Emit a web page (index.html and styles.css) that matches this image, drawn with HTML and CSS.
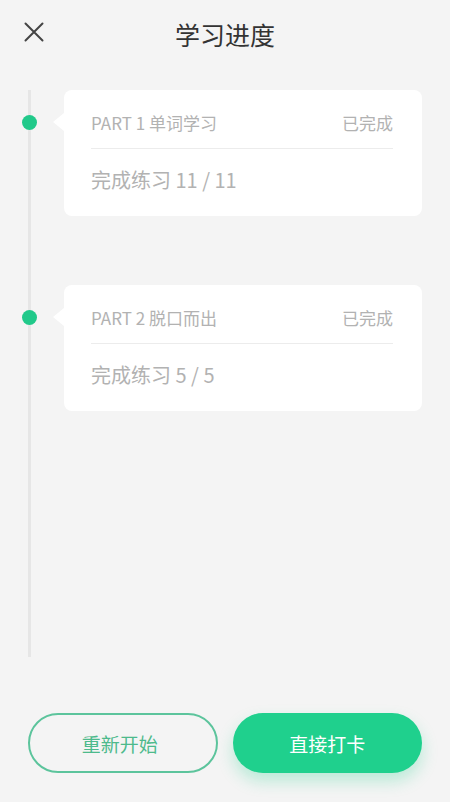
FILE: index.html
```html
<!DOCTYPE html>
<html lang="zh-CN">
<head>
<meta charset="utf-8">
<title>学习进度</title>
<link rel="stylesheet" href="styles.css">
</head>
<body>
<div class="page">
  <header class="header">
    <button class="close" aria-label="关闭">
      <svg width="20" height="20" viewBox="0 0 20 20"><path d="M1.5 1.5 L18.5 18.5 M18.5 1.5 L1.5 18.5" stroke="#444" stroke-width="2" fill="none" stroke-linecap="round"/></svg>
    </button>
    <h1 class="title">学习进度</h1>
  </header>

  <section class="timeline">
    <div class="item">
      <span class="dot"></span>
      <div class="card">
        <div class="card-head">
          <span class="part">PART 1 单词学习</span>
          <span class="status">已完成</span>
        </div>
        <div class="card-body">完成练习 11 / 11</div>
      </div>
    </div>
    <div class="item">
      <span class="dot"></span>
      <div class="card">
        <div class="card-head">
          <span class="part">PART 2 脱口而出</span>
          <span class="status">已完成</span>
        </div>
        <div class="card-body">完成练习 5 / 5</div>
      </div>
    </div>
  </section>

  <footer class="actions">
    <button class="btn btn-outline">重新开始</button>
    <button class="btn btn-fill">直接打卡</button>
  </footer>
</div>
</body>
</html>
```

FILE: styles.css
```css
* { box-sizing: border-box; }
html, body {
  margin: 0;
  padding: 0;
  background: #f4f4f4;
  font-family: "Noto Sans CJK SC", "Noto Sans", sans-serif;
}
.page {
  width: 450px;
  height: 802px;
  display: flex;
  flex-direction: column;
}
.header {
  height: 68px;
  position: relative;
  display: flex;
  align-items: center;
  justify-content: center;
}
.close {
  position: absolute;
  left: 24px;
  top: 22px;
  width: 20px;
  height: 20px;
  padding: 0;
  border: 0;
  background: none;
  display: block;
}
.close svg { display: block; }
.title {
  margin: 0;
  font-size: 25px;
  font-weight: 400;
  color: #333;
  line-height: 1;
  padding-top: 1px;
}
.timeline {
  margin: 22px 0 0 28px;
  height: 567px;
  border-left: 3px solid #e6e6e6;
  padding: 0 28px 0 33px;
  display: flex;
  flex-direction: column;
  gap: 69px;
}
.item {
  position: relative;
}
.dot {
  position: absolute;
  left: -42px;
  top: 24.5px;
  width: 15px;
  height: 15px;
  border-radius: 50%;
  background: #21c98a;
}
.card {
  position: relative;
  background: #fff;
  border-radius: 8px;
  height: 126px;
  padding: 0 29px 0 27px;
}
.card::before {
  content: "";
  position: absolute;
  left: -11px;
  top: 23px;
  border-top: 9px solid transparent;
  border-bottom: 9px solid transparent;
  border-right: 11px solid #fff;
}
.card-head {
  display: flex;
  justify-content: space-between;
  align-items: center;
  height: 59px;
  padding-top: 7px;
  border-bottom: 1px solid #ececec;
  font-size: 17px;
  color: #b2b2b2;
}
.card-body {
  height: 66px;
  display: flex;
  align-items: center;
  padding-bottom: 6px;
  font-size: 20px;
  color: #b2b2b2;
}
.actions {
  margin-top: 56px;
  padding: 0 28px;
  display: grid;
  grid-template-columns: 1fr 1fr;
  gap: 15px;
}
.btn {
  height: 60px;
  border-radius: 30px;
  font-family: inherit;
  font-size: 19px;
  padding: 0;
}
.btn-outline {
  background: transparent;
  border: 2px solid #5cc49c;
  color: #4dba8c;
  padding-right: 6px;
}
.btn-fill {
  background: #1fd08d;
  border: 0;
  color: #fff;
  box-shadow: 0 8px 16px rgba(31, 208, 141, 0.28);
}
```
